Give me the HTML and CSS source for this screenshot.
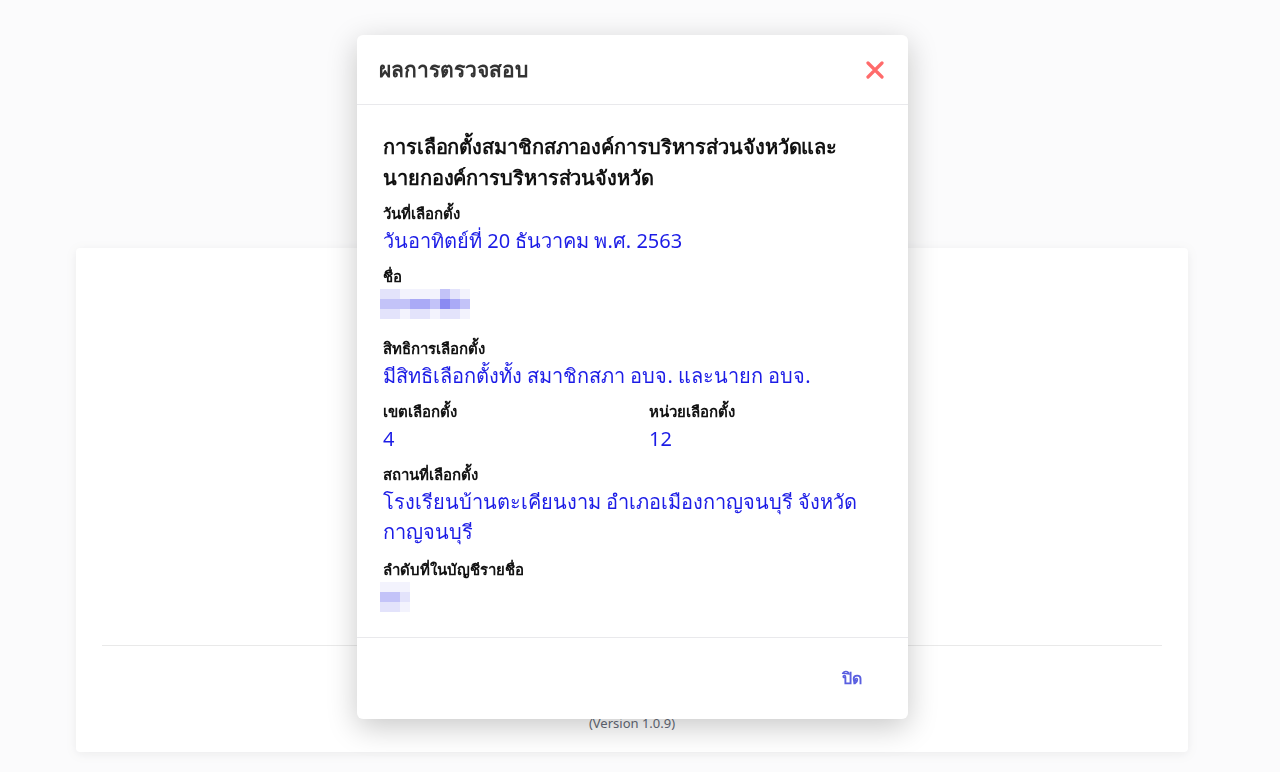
FILE: index.html
```html
<!DOCTYPE html>
<html lang="th">
<head>
    <meta charset="UTF-8">
    <meta name="viewport" content="width=device-width, initial-scale=1.0">
    <title>ผลการตรวจสอบ</title>
    <link rel="stylesheet" href="styles.css">
</head>
<body>

<div class="page">
    <div class="card">
        <div class="card-body"></div>
        <hr class="card-line">
        <div class="version">(Version 1.0.9)</div>
    </div>
</div>

<div class="overlay">
    <div class="modal">
        <div class="modal-header">
            <h3>ผลการตรวจสอบ</h3>
            <span class="close">
                <svg width="18" height="18" viewBox="0 0 18 18">
                    <path d="M2 2 L16 16 M16 2 L2 16" stroke="#ff6b6b" stroke-width="3.2" stroke-linecap="round"/>
                </svg>
            </span>
        </div>

        <div class="modal-body">
            <h2>การเลือกตั้งสมาชิกสภาองค์การบริหารส่วนจังหวัดและนายกองค์การบริหารส่วนจังหวัด</h2>

            <div class="field">
                <div class="label">วันที่เลือกตั้ง</div>
                <div class="value">วันอาทิตย์ที่ 20 ธันวาคม พ.ศ. 2563</div>
            </div>

            <div class="field name">
                <div class="label">ชื่อ</div>
                <div class="blur">
                    <div class="px-row">
                        <i class="p1"></i><i class="p1"></i><i class="p0"></i><i class="p0"></i><i class="p0"></i><i class="p0"></i><i class="p2"></i><i class="p1"></i><i class="p0"></i>
                    </div>
                    <div class="px-row">
                        <i class="p2"></i><i class="p2"></i><i class="p2"></i><i class="p3"></i><i class="p3"></i><i class="p2"></i><i class="p4"></i><i class="p3"></i><i class="p2"></i>
                    </div>
                    <div class="px-row">
                        <i class="p1"></i><i class="p1"></i><i class="p0"></i><i class="p1"></i><i class="p1"></i><i class="p0"></i><i class="p1"></i><i class="p1"></i><i class="p0"></i>
                    </div>
                </div>
            </div>

            <div class="field">
                <div class="label">สิทธิการเลือกตั้ง</div>
                <div class="value">มีสิทธิเลือกตั้งทั้ง สมาชิกสภา อบจ. และนายก อบจ.</div>
            </div>

            <div class="field row">
                <div>
                    <div class="label">เขตเลือกตั้ง</div>
                    <div class="value">4</div>
                </div>
                <div>
                    <div class="label">หน่วยเลือกตั้ง</div>
                    <div class="value">12</div>
                </div>
            </div>

            <div class="field place">
                <div class="label">สถานที่เลือกตั้ง</div>
                <div class="value">โรงเรียนบ้านตะเคียนงาม อำเภอเมืองกาญจนบุรี จังหวัดกาญจนบุรี</div>
            </div>

            <div class="field">
                <div class="label">ลำดับที่ในบัญชีรายชื่อ</div>
                <div class="blur">
                    <div class="px-row"><i class="p0"></i><i class="p0"></i><i class="p0"></i></div>
                    <div class="px-row"><i class="p2"></i><i class="p2"></i><i class="p1"></i></div>
                    <div class="px-row"><i class="p1"></i><i class="p1"></i><i class="p0"></i></div>
                </div>
            </div>
        </div>

        <div class="modal-footer">
            <button class="btn-close">ปิด</button>
        </div>
    </div>
</div>

</body>
</html>
```

FILE: styles.css
```css
body {
    margin: 0;
    background: #fbfbfc;
    font-family: "Noto Sans", Tahoma, sans-serif;
    color: #222;
}
.page {
    padding: 248px 92px 20px 76px;
}
.card {
    background: #fff;
    height: 504px;
    border-radius: 4px;
    box-shadow: 0 2px 12px rgba(0,0,0,0.08);
    display: flex;
    flex-direction: column;
}
.card-body {
    height: 397px;
}
.card-line {
    margin: 0 26px;
    border: none;
    border-top: 1px solid #e6e6e6;
}
.version {
    margin-top: 68px;
    text-align: center;
    font-size: 13px;
    color: #4a5060;
}

/* ventana de resultado */
.overlay {
    position: fixed;
    inset: 0;
    background: rgba(255,255,255,0.15);
}
.modal {
    position: absolute;
    left: 357px;
    top: 35px;
    width: 551px;
    background: #fff;
    border-radius: 6px;
    box-shadow: 0 8px 30px rgba(0,0,0,0.22);
}
.modal-header {
    height: 69px;
    padding: 0 22px;
    display: flex;
    align-items: center;
    justify-content: space-between;
    border-bottom: 1px solid #e9e9ec;
}
.modal-header h3 {
    margin: 0;
    font-size: 21px;
    font-weight: bold;
    color: #333;
}
.close {
    display: flex;
    margin-right: 2px;
    cursor: pointer;
}
.modal-body {
    padding: 26px 26px 18px 26px;
}
.modal-body h2 {
    margin: 0 0 7px 0;
    font-size: 20px;
    line-height: 31px;
    font-weight: bold;
    color: #111;
    letter-spacing: -0.1px;
}
.field {
    margin-bottom: 7px;
}
.label {
    font-size: 15px;
    font-weight: bold;
    line-height: 26px;
    color: #111;
}
.value {
    font-size: 20px;
    line-height: 30px;
    color: #1c1ce6;
}
.row {
    display: grid;
    grid-template-columns: 266px 1fr;
}
.blur {
    margin-left: -3px;
}
.name {
    margin-bottom: 16px;
}
.place {
    margin-bottom: 9px;
}
.px-row {
    display: flex;
}
.px-row i {
    display: block;
    width: 10px;
    height: 10px;
}
.p0 { background: #f3f3fd; }
.p1 { background: #e3e3fb; }
.p2 { background: #c3c3f8; }
.p3 { background: #aaaaf6; }
.p4 { background: #8a8af2; }
.modal-footer {
    border-top: 1px solid #e9e9ec;
    height: 81px;
    display: flex;
    align-items: center;
    justify-content: flex-end;
    padding: 0 36px;
}
.btn-close {
    background: none;
    border: none;
    font-family: inherit;
    font-size: 16px;
    font-weight: bold;
    color: #5a5fe0;
    padding: 8px 10px;
    cursor: pointer;
}
```
